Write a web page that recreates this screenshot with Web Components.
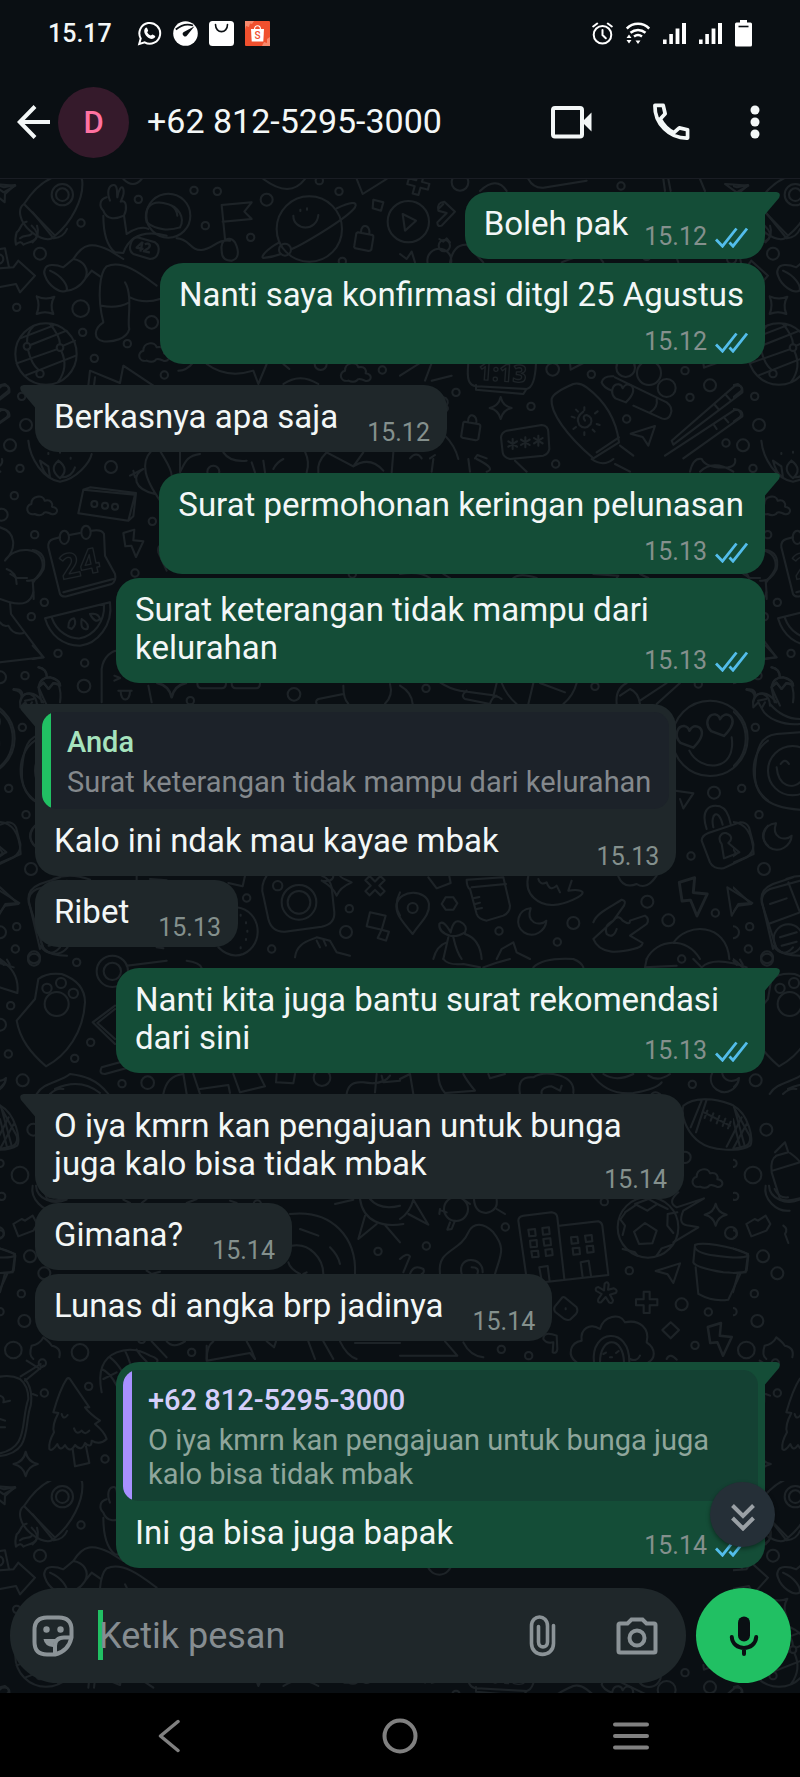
<!DOCTYPE html>
<html lang="id">
<head>
<meta charset="utf-8">
<meta name="viewport" content="width=device-width, initial-scale=1">
<title>Chat</title>
<style>
    body {
        margin: 0;
        background: #0a0f13;
        color: #f3f7f7;
        font-family: Roboto, "Noto Sans", sans-serif;
    }
</style>
</head>
<body>

<chat-app>
    <status-bar slot="top" time="15.17"></status-bar>
    <chat-header slot="top" initial="D">+62 812-5295-3000</chat-header>

    <chat-bubble side="out" tail time="15.12">Boleh pak</chat-bubble>
    <chat-bubble side="out" stacked time="15.12">Nanti saya konfirmasi ditgl 25 Agustus</chat-bubble>
    <chat-bubble side="in" tail time="15.12">Berkasnya apa saja</chat-bubble>
    <chat-bubble side="out" tail stacked time="15.13">Surat permohonan keringan pelunasan</chat-bubble>
    <chat-bubble side="out" time="15.13">Surat keterangan tidak mampu dari kelurahan</chat-bubble>
    <chat-bubble side="in" tail time="15.13">
        <quote-box slot="quote" name="Anda">Surat keterangan tidak mampu dari kelurahan</quote-box>Kalo ini ndak mau kayae mbak</chat-bubble>
    <chat-bubble side="in" time="15.13">Ribet</chat-bubble>
    <chat-bubble side="out" tail time="15.13">Nanti kita juga bantu surat rekomendasi dari sini</chat-bubble>
    <chat-bubble side="in" tail time="15.14">O iya kmrn kan pengajuan untuk bunga juga kalo bisa tidak mbak</chat-bubble>
    <chat-bubble side="in" time="15.14">Gimana?</chat-bubble>
    <chat-bubble side="in" time="15.14">Lunas di angka brp jadinya</chat-bubble>
    <chat-bubble side="out" tail time="15.14">
        <quote-box slot="quote" kind="contact" name="+62 812-5295-3000">O iya kmrn kan pengajuan untuk bunga juga kalo bisa tidak mbak</quote-box>Ini ga bisa juga bapak</chat-bubble>

    <chat-composer slot="composer" placeholder="Ketik pesan"></chat-composer>
    <system-nav slot="bottom"></system-nav>
</chat-app>

<script>
const buttonReset = `
    button {
        display: flex;
        align-items: center;
        justify-content: center;
        margin: 0;
        padding: 0;
        border: 0;
        background: none;
        color: inherit;
        font: inherit;
        cursor: pointer;
    }
    svg { display: block; flex: none; }
`;

class ChatApp extends HTMLElement {
    constructor() {
        super();
        this.attachShadow({ mode: 'open' });
        this.shadowRoot.innerHTML = `
            <style>
                :host {
                    display: flex;
                    flex-direction: column;
                    min-height: 100vh;
                }
                main {
                    flex: 1;
                    display: grid;
                    border-top: 1px solid #1a1d24;
                    overflow: hidden;
                }
                chat-wallpaper, .content { grid-area: 1 / 1; min-width: 0; }
                .content {
                    position: relative;
                    display: flex;
                    flex-direction: column;
                }
                .log {
                    flex: 1;
                    display: flex;
                    flex-direction: column;
                    gap: 4px;
                    padding: 0 35px 20px;
                    margin-top: -4px;
                }
                jump-button {
                    position: absolute;
                    right: 25px;
                    bottom: 146px;
                }
            </style>
            <slot name="top"></slot>
            <main>
                <chat-wallpaper></chat-wallpaper>
                <div class="content">
                    <div class="log"><slot></slot></div>
                    <slot name="composer"></slot>
                    <jump-button></jump-button>
                </div>
            </main>
            <slot name="bottom"></slot>
        `;
    }
}

class StatusBar extends HTMLElement {
    constructor() {
        super();
        this.attachShadow({ mode: 'open' });
    }

    connectedCallback() {
        const bars = `
            <svg width="23" height="23" viewBox="0 0 23 23" fill="#fff" aria-hidden="true">
                <path d="M0 17.5h3.6V22H0zM6.3 12h3.6v10H6.3zM12.6 6.5h3.8V22h-3.8zM19 1h4v21h-4z"/>
            </svg>`;
        this.shadowRoot.innerHTML = `
            <style>
                :host {
                    display: flex;
                    align-items: center;
                    height: 66px;
                    padding: 0 48px;
                    font-size: 25px;
                    font-weight: 500;
                }
                .group { display: flex; align-items: center; gap: 11px; }
                .right { margin-left: auto; gap: 13px; }
                .time { margin-right: 14px; }
                svg { display: block; }
            </style>
            <div class="group">
                <span class="time">${this.getAttribute('time')}</span>
                <svg width="25" height="25" viewBox="0 0 25 25" fill="none" stroke="#fff" stroke-width="2" aria-hidden="true">
                    <path d="M2.2 23l1.5-5.6A10.4 10.4 0 1 1 7.7 21.4z"/>
                    <path d="M8.2 7.2c.8-.9 1.6-.7 2 .1l.9 2.1c.2.6-.9 1.5-.9 1.9.5 1.300 2.200 2.900 3.600 3.300.5.1 1.200-1.200 1.800-1l2.200 1.100c.7.4.5 1.300 0 1.900-2.500 2.600-5.900.8-7.900-1.200s-3.900-5.400-1.700-8.200z" fill="#fff" stroke="none"/>
                </svg>
                <svg width="25" height="25" viewBox="0 0 25 25" aria-hidden="true">
                    <circle cx="12.500" cy="12.500" r="12.300" fill="#fff"/>
                    <path d="M2.800 8.500Q11 1.500 20 4.500" fill="none" stroke="#0a0f13" stroke-width="1.800"/>
                    <path d="M21.500 5.200L14.200 14.300A2.400 2.400 0 1 1 10.800 11z" fill="#0a0f13"/>
                </svg>
                <svg width="25" height="25" viewBox="0 0 25 25" aria-hidden="true">
                    <rect width="25" height="25" rx="3.500" fill="#fff"/>
                    <path d="M6.500 3.500c0 9.500 12 9.500 12 0" fill="none" stroke="#0a0f13" stroke-width="1.600" stroke-linecap="round"/>
                </svg>
                <svg width="25" height="25" viewBox="0 0 25 25" aria-hidden="true">
                    <rect width="25" height="25" rx="1" fill="#f0502e"/>
                    <path d="M0 0h9L7 3 5 2.500 4 6 1 5 0 9zM25 16v9h-8l2-4 3 1v-4z" fill="#f88a6d"/>
                    <path d="M6 8h13l-.7 12.500H6.700z" fill="#fff"/>
                    <path d="M9.500 8.500C9.500 3.500 15.500 3.500 15.500 8.500" fill="none" stroke="#fff" stroke-width="1.200"/>
                    <text x="12.500" y="18" font-size="10" text-anchor="middle" fill="#f0502e">S</text>
                </svg>
            </div>
            <div class="group right">
                <svg width="21" height="23" viewBox="0 0 21 23" fill="none" stroke="#fff" stroke-width="2" stroke-linecap="round" aria-hidden="true">
                    <circle cx="10.500" cy="12.800" r="8.800"/>
                    <path d="M10.500 8v5l3.300 3.300M1.200 4.500l4-3M19.800 4.500l-4-3"/>
                </svg>
                <svg width="24" height="23" viewBox="0 0 24 23" fill="none" stroke="#fff" stroke-width="2.500" aria-hidden="true">
                    <path d="M.8 6.500C7 .3 17 .3 23.200 6.500M4.500 10.800c4.500-3.800 10.500-3.800 15 0M8 14.500c2.500-1.900 5.500-1.900 8 0"/>
                    <path d="M9.500 18.500h5L12 22zM.5 16h5L3 12.500zM.5 18h5L3 21.500z" fill="#fff" stroke="none"/>
                </svg>
                ${bars}${bars}
                <svg width="17" height="27" viewBox="0 0 17 27" aria-hidden="true">
                    <path d="M5 0h7v2.500h3.500Q17 2.500 17 4v21q0 1.500-1.500 1.500h-14Q0 26.500 0 25V4q0-1.500 1.500-1.500H5z" fill="#fff"/>
                    <path d="M3.500 6.500h10" stroke="#0a0f13" stroke-width="1.600"/>
                </svg>
            </div>
        `;
    }
}

class ChatHeader extends HTMLElement {
    constructor() {
        super();
        this.attachShadow({ mode: 'open' });
    }

    connectedCallback() {
        this.shadowRoot.innerHTML = `
            <style>
                ${buttonReset}
                :host {
                    display: flex;
                    align-items: center;
                    height: 112px;
                    padding: 0 40px 0 17px;
                }
                .avatar {
                    display: flex;
                    align-items: center;
                    justify-content: center;
                    width: 71px;
                    height: 71px;
                    margin: 0 18px 0 8px;
                    border-radius: 50%;
                    background: #351a2b;
                    color: #ff72a1;
                    font-size: 31px;
                    font-weight: 500;
                }
                h1 {
                    flex: 1;
                    margin: 0;
                    padding-bottom: 2px;
                    font-size: 34px;
                    font-weight: 400;
                    white-space: nowrap;
                }
                .actions { display: flex; align-items: center; gap: 60px; }
            </style>
            <button type="button" aria-label="Kembali">
                <svg width="33" height="34" viewBox="0 0 33 34" fill="none" stroke="currentColor" stroke-width="4">
                    <path d="M33 17H3M18 1.500L2.800 17 18 32.500"/>
                </svg>
            </button>
            <div class="avatar">${this.getAttribute('initial')}</div>
            <h1><slot></slot></h1>
            <div class="actions">
                <button type="button" aria-label="Panggilan video">
                    <svg width="42" height="34" viewBox="0 0 42 34" fill="none" stroke="currentColor" stroke-width="4">
                        <rect x="3" y="3" width="29" height="28.500" rx="2"/>
                        <path d="M32 17l9.500-9.500v19z" fill="currentColor" stroke="none"/>
                    </svg>
                </button>
                <button type="button" aria-label="Panggilan suara">
                    <svg width="38" height="38" viewBox="0 0 39 39" fill="none" stroke="currentColor" stroke-width="3.800" stroke-linejoin="round">
                        <path d="M3 2.500H11.500L13.500 11 8.500 16.500C11.500 22.500 16.500 27.500 22.500 30.500L28 25.500 36.500 27.500V36C18 36.500 2.500 21 3 2.500z"/>
                    </svg>
                </button>
                <button type="button" aria-label="Menu lainnya">
                    <svg width="10" height="34" viewBox="0 0 10 34" fill="currentColor">
                        <circle cx="5" cy="5" r="4.500"/><circle cx="5" cy="17" r="4.500"/><circle cx="5" cy="29" r="4.500"/>
                    </svg>
                </button>
            </div>
        `;
    }
}

class ChatBubble extends HTMLElement {
    constructor() {
        super();
        this.attachShadow({ mode: 'open' });
    }

    connectedCallback() {
        const out = this.getAttribute('side') === 'out';
        const ticks = `
            <svg class="ticks" width="33" height="21" viewBox="0 0 33 21" fill="none" stroke="#53bdeb" stroke-width="2.800" role="img" aria-label="Dibaca">
                <path d="M1 12.500l6.500 6.700L21.500 1.500M14.500 15.500l3.500 3.700L32 1.500"/>
            </svg>`;
        this.shadowRoot.innerHTML = `
            <style>
                :host {
                    position: relative;
                    display: block;
                    box-sizing: border-box;
                    max-width: calc(100% - 81px);
                    border-radius: 23px;
                    font-size: 33px;
                    line-height: 38px;
                }
                :host([side="out"]) {
                    align-self: flex-end;
                    background: #144d37;
                    --tail: #144d37;
                    --quote: #144133;
                    --quote-text: #8fa69c;
                    --gap: 16px;
                    --drop: 18px;
                    --foot: 8px;
                }
                :host([side="in"]) {
                    align-self: flex-start;
                    background: #1f272a;
                    --tail: #1f272a;
                    --quote: #1c2229;
                    --quote-text: #84898d;
                    --gap: 29px;
                    --drop: 21px;
                    --foot: 5px;
                }
                /* a tail opens a new run of messages */
                :host([tail]) { margin-top: 17px; }
                :host([tail][side="out"]) { border-top-right-radius: 0; }
                :host([tail][side="in"]) { border-top-left-radius: 0; }
                .tail { position: absolute; top: 0; display: block; }
                :host([side="out"]) .tail { left: 100%; }
                :host([side="in"]) .tail { right: 100%; transform: scaleX(-1); }
                .body { display: flow-root; padding: 13px 21px var(--foot) 19px; }
                .meta {
                    float: right;
                    display: flex;
                    align-items: center;
                    gap: 8px;
                    margin: var(--drop) -4px 0 var(--gap);
                    color: #84908d;
                    font-size: 25px;
                    line-height: 28px;
                }
                :host([stacked]) .meta {
                    float: none;
                    justify-content: flex-end;
                    margin-top: 14px;
                }
                .ticks { display: block; }
            </style>
            ${this.hasAttribute('tail') ? `
                <svg class="tail" width="15" height="23" viewBox="0 0 15 23" aria-hidden="true">
                    <path d="M0 0H11.500Q16.500 1 14 6L0 22.500z" fill="var(--tail)"/>
                </svg>` : ''}
            <slot name="quote"></slot>
            <div class="body"><slot></slot><span class="meta"><time>${this.getAttribute('time')}</time>${out ? ticks : ''}</span></div>
        `;
    }
}

class QuoteBox extends HTMLElement {
    constructor() {
        super();
        this.attachShadow({ mode: 'open' });
    }

    connectedCallback() {
        this.shadowRoot.innerHTML = `
            <style>
                :host {
                    --bar: #21c063;
                    --name: #a6e3bd;
                    display: block;
                    padding: 8px 7px 0;
                    font-size: 29px;
                }
                :host([kind="contact"]) { --bar: #a791ff; --name: #d5cffb; }
                .box {
                    display: flex;
                    overflow: hidden;
                    border-radius: 15px;
                    background: var(--quote);
                }
                .bar { flex: none; width: 9px; background: var(--bar); }
                .text { padding: 12px 18px 10px 16px; }
                .name {
                    margin-bottom: 5px;
                    color: var(--name);
                    font-weight: 500;
                    line-height: 36px;
                }
                .message { color: var(--quote-text); line-height: 34px; }
            </style>
            <div class="box">
                <div class="bar"></div>
                <div class="text">
                    <div class="name">${this.getAttribute('name')}</div>
                    <div class="message"><slot></slot></div>
                </div>
            </div>
        `;
    }
}

class JumpButton extends HTMLElement {
    constructor() {
        super();
        this.attachShadow({ mode: 'open' });
        this.shadowRoot.innerHTML = `
            <style>
                ${buttonReset}
                :host { display: block; }
                button {
                    width: 65px;
                    height: 65px;
                    border-radius: 50%;
                    background: #252f37;
                    box-shadow: 0 2px 4px #0006;
                    color: #9aa0a5;
                }
                svg { margin-top: 5px; }
            </style>
            <button type="button" aria-label="Ke pesan terbaru">
                <svg width="24" height="28" viewBox="0 0 24 28" fill="none" stroke="currentColor" stroke-width="4">
                    <path d="M1.500 2.500L12 13 22.500 2.500M1.500 15L12 25.500 22.500 15"/>
                </svg>
            </button>
        `;
    }
}

class ChatComposer extends HTMLElement {
    constructor() {
        super();
        this.attachShadow({ mode: 'open' });
    }

    connectedCallback() {
        const placeholder = this.getAttribute('placeholder');
        this.shadowRoot.innerHTML = `
            <style>
                ${buttonReset}
                :host {
                    display: flex;
                    gap: 10px;
                    padding: 0 9px 10px 10px;
                }
                .field {
                    flex: 1;
                    min-width: 0;
                    display: flex;
                    align-items: center;
                    height: 95px;
                    box-sizing: border-box;
                    padding: 0 28px 0 22px;
                    border-radius: 48px;
                    background: #1f272a;
                    color: #8b9397;
                }
                .caret {
                    flex: none;
                    width: 5px;
                    height: 50px;
                    margin: 0 -4px 2px 24px;
                    background: #21c063;
                }
                input {
                    flex: 1;
                    min-width: 0;
                    padding: 0;
                    border: 0;
                    outline: 0;
                    background: none;
                    color: #f3f7f7;
                    font: 36px Roboto, "Noto Sans", sans-serif;
                }
                input::placeholder { color: #868d91; opacity: 1; }
                .attach { margin-right: 59px; }
                .mic {
                    flex: none;
                    width: 95px;
                    height: 95px;
                    border-radius: 50%;
                    background: #21c063;
                    color: #0a0f13;
                }
            </style>
            <div class="field">
                <button type="button" aria-label="Emoji dan stiker">
                    <svg width="42" height="42" viewBox="0 0 42 42" fill="none" stroke="currentColor" stroke-width="4">
                        <path d="M15 2.500H27Q39.500 2.500 39.500 15V22.500C37.500 31 31.500 37.500 23 39.500H15Q2.500 39.500 2.500 27V15Q2.500 2.500 15 2.500z"/>
                        <path d="M39 22.500H32Q23 22.500 23 31V39"/>
                        <path d="M11.500 24Q12.500 31 21 32Q21.500 26 24.500 24z" fill="currentColor" stroke="none"/>
                        <circle cx="14.500" cy="14.500" r="3.200" fill="currentColor" stroke="none"/>
                        <circle cx="28.500" cy="14.500" r="3.200" fill="currentColor" stroke="none"/>
                    </svg>
                </button>
                <span class="caret"></span>
                <input type="text" aria-label="${placeholder}" placeholder="${placeholder}">
                <button type="button" class="attach" aria-label="Lampirkan">
                    <svg width="28" height="42" viewBox="0 0 28 42" fill="none" stroke="currentColor" stroke-width="3.600" stroke-linecap="round">
                        <path d="M24.500 10.500V28.500C24.500 43 2.500 43 2.500 28.500V11C2.500-1 18.500-1 18.500 11V27C18.500 33.500 9.500 33.500 9.500 27V11.500"/>
                    </svg>
                </button>
                <button type="button" aria-label="Kamera">
                    <svg width="42" height="38" viewBox="0 0 42 38" fill="none" stroke="currentColor" stroke-width="4">
                        <path d="M4 6.500H11.500L15.500 2.500H26.500L30.500 6.500H38Q39.500 6.500 39.500 8V34Q39.500 35.500 38 35.500H4Q2.500 35.500 2.500 34V8Q2.500 6.500 4 6.500z"/>
                        <circle cx="21" cy="21" r="7.500"/>
                    </svg>
                </button>
            </div>
            <button type="button" class="mic" aria-label="Pesan suara">
                <svg width="30" height="40" viewBox="0 0 30 40" fill="none" stroke="currentColor" stroke-width="4">
                    <rect x="9" y=".5" width="12" height="25" rx="6" fill="currentColor" stroke="none"/>
                    <path d="M2.800 21C3.500 35.500 26.500 35.500 27.200 21M15 32V38" stroke-linecap="round"/>
                </svg>
            </button>
        `;
    }
}

class SystemNav extends HTMLElement {
    constructor() {
        super();
        this.attachShadow({ mode: 'open' });
        this.shadowRoot.innerHTML = `
            <style>
                ${buttonReset}
                :host {
                    display: flex;
                    height: 86px;
                    padding: 0 53px;
                    background: #000;
                    color: #808080;
                }
                button { flex: 1; }
            </style>
            <button type="button" aria-label="Kembali">
                <svg width="22" height="34" viewBox="0 0 22 34" fill="none" stroke="currentColor" stroke-width="3.500" stroke-linecap="round" stroke-linejoin="round">
                    <path d="M20 2.500L2.500 17 20 31.500"/>
                </svg>
            </button>
            <button type="button" aria-label="Beranda">
                <svg width="36" height="36" viewBox="0 0 36 36" fill="none" stroke="currentColor" stroke-width="4">
                    <circle cx="18" cy="18" r="15.500"/>
                </svg>
            </button>
            <button type="button" aria-label="Aplikasi terbaru">
                <svg width="36" height="28" viewBox="0 0 36 28" fill="none" stroke="currentColor" stroke-width="4" stroke-linecap="round">
                    <path d="M2 2.500H34M2 14H34M2 25.500H34"/>
                </svg>
            </button>
        `;
    }
}

// Doodles are drawn on a grid three times finer than the page.
// Each section is [x, y, small rings, shapes]; one ring is [cx, cy, r].
const sections = [
    [0, 0, [[243,132,11],[415,61,11],[582,34,11],[652,37,11],[800,62,18],[616,140,11],[752,175,11],[1017,37,11],[120,224,18],[50,385,11],[242,389,25],[455,430,19],[248,460,11],[382,494,11],[283,538,11],[493,588,11],[65,652,11],[78,738,18],[30,799,18],[60,868,11],[333,864,18],[43,950,11],[457,1027,11],[104,1067,11],[405,1182,11],[958,5,11],[1027,247,11],[1147,573,11],[962,555,18],[640,878,18],[5,1007,18]], `
        <path d="M72 75L165 170M72 75C50 90 60 130 90 155S150 190 165 170C215 130 250 60 247 10C246-25 200-20 160-5C120 10 95 40 72 75"/>
        <circle cx="187" cy="47" r="32"/><circle cx="187" cy="47" r="19"/>
        <path d="M80 128C60 130 65 150 50 160C45 175 45 185 48 197C60 185 65 190 70 197C80 190 100 190 108 178C118 165 105 150 95 140M60 178C75 165 85 175 95 165"/>
        <path d="M-30 10L12 25L45 18L15 45L14 70L-10 50"/>
        <path d="M330 65C320 40 325 20 340 18S350 50 352 55C355 35 365 15 370 30S365 60 362 68C380 60 382 90 372 110C350 120 320 125 310 95C295 80 300 60 320 55"/>
        <path d="M310 110C310 160 320 200 345 220L370 222C385 180 420 150 500 170M372 110L380 165C400 150 430 140 445 150"/>
        <circle cx="505" cy="110" r="66"/>
        <path d="M440 130C430 90 450 65 490 72C540 80 555 120 540 145M440 130C470 155 510 155 540 145M515 80Q530 90 532 110"/>
        <path d="M412 175L465 190Q480 200 475 220Q470 240 450 240L400 225Q385 215 392 195Q398 175 412 175"/>
        <text x="409" y="218" font-size="38" transform="rotate(12 430 205)">42</text>
        <path d="M665 78L755 70L733 98L755 120L668 128M665 78L675 180M665 215C660 180 690 170 705 190C720 220 715 240 695 245C670 245 665 230 665 215M530 178C570 180 570 215 605 213C640 210 650 180 690 185"/>
        <path d="M220 240C250 190 280 190 330 215L370 240M135 270C140 255 165 255 190 265L220 240C250 245 270 270 255 300C240 325 215 335 200 335M150 275C185 290 205 320 200 335C180 345 145 320 135 290Q130 280 135 270M255 300L275 275L300 292M310 430C290 350 300 280 320 262C370 240 430 290 470 320M375 310C400 350 380 430 388 450C380 480 340 490 310 487C280 480 280 450 310 430M305 380Q350 390 388 370M390 355C420 370 450 370 480 360"/>
        <circle cx="928" cy="150" r="98"/><circle cx="855" cy="212" r="18"/>
        <path d="M880 110C880 155 950 160 955 108M901 92v4M921 88v4M1010 88C1050 70 1075 65 1065 85C1040 120 900 200 875 210M838 190C800 210 780 235 790 237C810 235 830 230 843 225"/>
        <use href="#lock" x="1091" y="180"/>
        <path d="M1120 62L1150 70L1143 95L1118 88ZM1070 0L1088 45L1160 0M790 0Q870 60 915 0M370 0Q400 30 425 0"/>
        <path d="M-30 270L40 265L55 245L105 290L60 340L48 315L-30 330M0 210L15 208L27 265"/>
        <use href="#spark4" x="137" y="378"/>
        <circle cx="138" cy="525" r="92"/><circle cx="81" cy="502" r="10"/><circle cx="180" cy="506" r="10"/><circle cx="120" cy="584" r="11"/>
        <path d="M100 442Q80 460 81 492M84 512C92 545 100 560 116 573M150 435C170 460 180 480 180 496M184 516C200 550 195 580 175 608M60 478L160 440M91 498L200 455M50 553L170 511M190 500L225 485M75 590L228 530"/>
        <use href="#cloud" x="460" y="520"/><use href="#cloud" x="1065" y="580"/><use href="#cloud" x="124" y="980"/>
        <path d="M265 620L270 575L360 612L370 560L460 620M282 620L285 595M535 575Q560 575 580 550M620 555Q680 600 760 575L775 615L800 555M850 555L868 570M850 615Q900 580 955 615"/>
        <path d="M-5 620L15 615Q30 625 25 635L-5 660M0 690L15 692Q30 705 20 715L-5 732"/>
        <path d="M85 785C90 840 130 900 180 908C230 900 270 850 275 825M120 845L145 862L150 895Q130 885 120 845M175 845Q210 870 180 898Q145 870 175 845M225 865Q215 895 185 895M145 822v3M180 818v3M212 836v3"/>
        <path d="M455 815C420 850 430 900 495 985M480 815C500 850 515 870 515 890M540 820L540 880C555 850 560 830 600 825M390 890L430 870C395 890 400 930 465 945M400 875L405 895M670 820Q690 850 740 845M755 850L765 880M790 845L795 880M820 870Q830 850 850 840M915 818Q930 850 920 880M980 820Q950 850 955 880M980 820L1060 862L1090 820M1060 862Q1110 830 1150 875M1180 820L1175 880"/>
        <path d="M250 932L405 947L385 1025L235 1003ZM250 932L270 925L408 942L400 1012L385 1025"/>
        <circle cx="283" cy="975" r="9"/><circle cx="315" cy="980" r="9"/><circle cx="345" cy="983" r="9"/>
        <path d="M0 1045C50 1060 50 1110 15 1145C40 1100 130 1100 128 1160C128 1180 110 1190 100 1210M20 1170Q50 1180 50 1215"/>
        <path d="M180 1075L160 1080Q143 1085 145 1105L180 1245Q185 1255 200 1252L335 1215Q350 1205 345 1185L315 1130L312 1065Q305 1050 275 1055M208 1068L240 1062M190 1240L340 1200"/>
        <ellipse cx="193" cy="1075" rx="14" ry="20"/><ellipse cx="258" cy="1060" rx="14" ry="20"/>
        <text x="178" y="1190" font-size="104" font-weight="700" transform="rotate(-12 240 1150)">24</text>
        <use href="#bolt" x="398" y="1092"/>
        <path d="M500 1095Q470 1095 475 1120L500 1175"/>`],
    [400, 0, [[180,10,25],[663,21,11],[458,571,19],[574,586,11],[677,566,28],[747,582,36],[800,627,27],[930,619,18],[870,655,11],[855,575,11],[393,682,11],[168,640,11],[680,720,11],[740,232,11],[995,240,14],[978,792,11]], `
        <use href="#plus" x="55" y="15" transform="rotate(15 55 15)"/>
        <path d="M975 15L1045 20L1010 40ZM385 0Q400 28 430 26L560 5M790 0L795 36M805 0L812 36M900 0L915 36M240 36Q290 -10 320 36"/>
        <circle cx="25" cy="128" r="62"/><path d="M8 105L48 125L15 155Z"/>
        <path d="M115 95Q110 70 133 68L165 98L125 140Q112 145 112 130L140 102ZM130 75L115 90"/>
        <circle cx="133" cy="200" r="17"/><circle cx="118" cy="245" r="36"/>
        <path d="M118 180L130 188L140 178L150 190M0 225L20 240L35 218L45 250M150 250Q160 195 200 197L250 250M485 250Q510 240 520 237M600 237L610 250M830 237L835 250"/>
        <path d="M1097 100L1160 178Q1190 175 1200 150M1097 190Q1120 170 1110 140"/>
        <path d="M205 552C200 600 205 620 230 622L380 630Q405 625 408 552M228 618L228 632L370 645L378 632M510 552L512 572L550 552M910 552L912 566L950 552M0 590L60 552M75 605L95 552M95 605L155 590"/>
        <text x="235" y="606" font-size="72" font-weight="700" transform="rotate(4 300 590)">1:13</text>
        <path d="M455 660Q460 640 520 615Q540 610 560 625C620 670 650 730 657 790L580 838C500 770 450 700 455 660M657 775L590 820M660 800L700 830"/>
        <path d="M555 725Q545 710 560 708Q580 715 572 735Q555 755 538 738Q525 715 550 698M553 685v8M553 760v8M515 713l9 3M590 735l9 3M520 750l8-6M585 703l8-6M528 692l6 6M578 752l6 6"/>
        <path d="M640 592Q610 590 605 610Q610 625 635 635M645 595L800 670Q820 685 812 705Q805 725 785 718L700 680M770 660Q775 685 750 700"/>
        <use href="#heart" x="668" y="640"/>
        <path d="M815 785L1005 620Q1030 615 1027 640L820 797ZM795 830L1005 692Q1030 692 1027 712L850 838M942 675L955 690M975 645L990 662M940 735L950 750M972 715L985 730"/>
        <use href="#lock" x="212" y="748"/>
        <path d="M320 755L425 738Q445 740 445 760L448 810Q445 825 430 830L330 840Q310 835 308 820L303 775Q305 760 320 755"/>
        <use href="#star6" x="338" y="795"/><use href="#star6" x="376" y="790"/><use href="#star6" x="415" y="785"/>
        <use href="#spark4b" x="302" y="687"/><use href="#cursor" x="730" y="768"/>
        <path d="M0 1010M130 655Q150 660 140 680Q150 690 135 700M135 770Q165 800 175 840M90 838L105 828M225 838L232 828L260 838M30 838Q50 815 65 838"/>`],
    [400, 280, [[467,15,11],[78,688,11],[585,682,11],[942,1001,18],[873,1191,11],[742,1328,18],[946,1362,11],[520,1392,18],[297,1416,11],[472,1449,11],[805,1384,18],[895,675,11]], `
        <path d="M95 38L100 0M205 0L210 38M230 0Q290 30 260 38M345 5L380 38M575 0Q610 25 640 0M645 15L690 38M870 38Q880 -5 905 0M905 0Q920 30 985 25Q1010 20 1005 0M900 38Q940 0 1000 38"/>
        <path d="M0 345Q60 335 90 357M130 345L150 357M340 357Q360 340 410 357M580 345L655 350L650 357M720 345L745 357M1030 345L1050 357L1080 357"/>
        <path d="M1097 273Q1140 280 1130 330Q1110 370 1080 365M1097 365Q1100 400 1100 420M1097 560L1130 595L1097 600"/>
        <path d="M0 680Q35 700 38 735M120 670Q150 690 180 695L290 710M200 695Q180 710 195 720L270 735M290 672L280 712M270 735Q280 700 305 720M305 672Q320 710 350 735M400 672L385 735M530 672Q520 710 490 735M420 672L495 700M650 735Q645 690 680 672M660 710L690 690Q715 700 720 735M800 672L720 725M840 672L770 735"/>
        <circle cx="930" cy="838" r="113"/>
        <path d="M868 875C900 940 1010 940 995 835"/>
        <use href="#heart" transform="translate(868 830) scale(1.200)"/><use href="#heart" transform="translate(960 795) scale(1.200)"/>
        <path d="M1040 690Q1070 690 1065 710M1060 745Q1055 700 1090 705Q1110 715 1110 740M1060 745L1075 730L1085 748L1095 730M1110 735C1140 770 1170 780 1200 780M1085 748C1100 780 1150 800 1200 795M1115 625Q1140 630 1140 655M1115 685Q1120 655 1150 655Q1180 665 1180 680L1160 672L1145 690L1130 672L1115 685Q1130 720 1140 740"/>
        <path d="M1200 820L1130 825C1080 830 1070 870 1065 930C1060 1000 1090 1045 1200 1052"/>
        <circle cx="1178" cy="935" r="74"/><path d="M1130 925C1135 985 1180 990 1200 970M1142 915Q1155 895 1167 915"/>
        <path d="M826 995L880 1003L850 1048L840 1020"/>
        <path d="M905 1145Q905 1130 925 1122L1020 1090Q1040 1090 1047 1105L1060 1155Q1062 1180 1040 1195L970 1228Q940 1230 930 1210ZM920 1110C900 1050 930 1035 960 1042C985 1050 990 1085 992 1095M940 1105C930 1065 955 1045 968 1097"/>
        <path d="M965 1155C950 1135 965 1120 978 1122C1000 1130 995 1145 985 1152L1018 1180L972 1198Z"/>
        <use href="#moon" x="1133" y="1135"/><use href="#bolt" transform="translate(877 1312) scale(1.400)"/>
        <path d="M982 1285L1057 1332L1015 1335L995 1370Z"/>
        <path d="M580 1390C590 1360 640 1340 665 1322Q680 1325 672 1340L640 1385Q610 1400 620 1425Q640 1440 650 1410M640 1385Q655 1365 668 1385Q690 1400 690 1385L735 1370Q750 1380 740 1395L690 1430L728 1452Q725 1465 700 1470C660 1480 600 1490 580 1440Z"/>
        <path d="M385 1250C370 1310 420 1340 460 1338C500 1335 550 1310 548 1300Q540 1290 505 1295L515 1265M415 1260Q420 1280 440 1270Q450 1300 470 1280L480 1300M655 1252Q670 1290 710 1275Q740 1295 770 1250"/>
        <path d="M200 1262L310 1255L330 1340Q330 1360 310 1370L260 1385Q235 1380 230 1365L210 1290Q200 1285 200 1262M215 1285L318 1275M220 1318L238 1314M226 1335L240 1331M230 1350L246 1347"/>
        <path d="M38 1425C0 1380 -15 1360 -10 1335C0 1290 80 1290 87 1335C90 1370 60 1390 38 1425ZM85 1255L110 1288L152 1272L148 1252"/><circle cx="38" cy="1347" r="15"/>
        <path d="M137 1315L160 1315L172 1333L160 1352L137 1352L125 1335Z"/>
        <use href="#moon" x="397" y="1390"/>
        <path d="M150 1430Q115 1420 118 1395Q130 1380 152 1420Q160 1380 180 1388Q205 1400 195 1420Q170 1435 150 1430M145 1435L130 1500M160 1435Q170 1480 185 1500M195 1425Q240 1440 245 1500M100 1500Q110 1460 140 1450M290 1500L305 1470L340 1450L350 1480L390 1500"/>
        <path d="M1200 1265L1110 1290Q1085 1300 1085 1330L1130 1470Q1150 1490 1200 1490M1105 1395L1200 1360M1110 1335L1160 1318M1165 1270L1200 1360"/><circle cx="1165" cy="1440" r="44"/>
        <path d="M1140 1435L1190 1420M1145 1460L1190 1448M740 1500C770 1440 860 1430 900 1500M820 1452C860 1390 980 1390 988 1500"/>`],
    [0, 380, [[133,130,11],[94,173,11],[174,283,11],[254,312,11],[252,381,19],[75,350,11],[882,406,19],[571,425,11],[67,505,11],[26,688,11],[78,767,11],[93,930,18],[740,1017,11],[833,980,14],[1048,1049,11],[1038,1119,18],[50,1103,11],[46,1170,11],[102,1195,18],[815,1170,11],[0,355,18],[0,1120,18],[1057,45,11]], `
        <path d="M135 178L330 130C340 200 290 255 240 260C190 260 150 230 135 178M155 175C170 220 210 240 240 238C280 230 315 190 312 137M205 205Q205 180 222 178Q232 195 215 210ZM245 180Q270 195 262 210Q240 215 245 180M270 165Q295 160 300 180Q285 195 270 165"/>
        <path d="M30 130Q90 145 100 100M0 120L30 130L33 165L130 295L0 310M0 190Q10 205 25 200Q40 230 70 222"/>
        <path d="M305 430L305 330C310 290 340 275 350 275M445 380L455 430M343 350L360 357L343 365M355 395L395 395M362 397C362 430 390 430 390 397"/>
        <path d="M115 325Q140 330 140 355M115 385Q120 355 150 355Q175 360 180 375L160 372L145 390L130 370L115 385L125 430M175 375Q185 400 180 430M40 392Q65 395 65 415M60 430Q70 395 100 405Q120 415 130 430M75 425L100 420"/>
        <use href="#spark4b" transform="translate(515 372) scale(1.300)"/>
        <path d="M592 372Q592 388 605 388H665Q678 388 678 372M695 372Q695 388 708 388H768Q780 388 780 372M1030 405L955 420Q945 425 950 434M1030 380Q1030 420 1045 434M1170 375Q1180 410 1155 434"/>
        <path d="M-20 445C60 480 55 600 -20 635M105 545C50 580 45 680 105 725M-20 790C40 780 60 830 62 885L-20 920M0 870L10 885L-5 895M105 800Q75 830 105 860M0 985L55 1035L15 1040L0 1060M85 1020Q85 990 120 975L180 955M85 1020L120 1170M410 950V964M450 960L500 964M685 972L728 982L735 950M160 960Q210 940 270 962"/>
        <path d="M800 950Q780 980 790 1010L805 1080Q815 1120 855 1118L965 1103Q1005 1095 1003 1060L995 985Q990 960 965 950"/>
        <circle cx="897" cy="1030" r="52"/><circle cx="897" cy="1030" r="34"/>
        <path d="M965 965Q1000 970 1000 950M965 965Q1000 985 1010 1010Q1020 985 1055 970Q1020 955 1020 950"/>
        <use href="#plus" x="1125" y="980" transform="rotate(45 1125 980)"/>
        <path d="M1110 1060L1157 1070L1145 1112L1100 1102ZM1145 1112L1167 1118L1158 1145L1133 1137ZM885 1195C890 1150 930 1145 950 1135L990 1145L1010 1180L1050 1190M950 1145L960 1165M970 1142L978 1160M1200 1000Q1180 1040 1200 1070"/>
        <path d="M710 1045C785 1055 795 1155 730 1185Q690 1200 655 1165M722 1067v3M738 1090v3M742 1115v3M738 1140v3M722 1165v3M120 1160Q150 1200 180 1165M470 1165L490 1168"/>`],
    [0, 780, [[102,2,18],[230,10,11],[32,140,11],[0,197,18],[25,285,11],[272,250,11],[224,298,11],[68,364,18],[366,374,11],[443,371,19],[100,512,18],[60,648,25],[0,613,11],[5,712,11],[90,892,18],[133,943,18],[64,1004,11],[73,1086,18],[40,1173,25],[240,1180,25],[575,1180,11],[772,735,11],[966,356,25],[1134,877,11],[0,825,11],[0,1058,11]], `
        <path d="M50 185L105 120L115 60Q140 40 185 45Q255 70 255 130C250 220 200 290 138 322C90 280 60 240 50 185"/>
        <circle cx="141" cy="88" r="14"/><circle cx="183" cy="72" r="15"/><circle cx="220" cy="103" r="14"/><circle cx="170" cy="135" r="36"/>
        <circle cx="337" cy="37" r="47"/><circle cx="337" cy="37" r="26"/>
        <path d="M0 0Q60 40 52 102L0 85M380 20L500 5M560 5Q600 10 605 27M345 140L278 190L345 255M345 150L292 192L345 240M365 308L305 325Q295 345 315 345L400 322"/>
        <path d="M110 405C130 370 180 370 210 345C250 350 290 360 325 405M165 390Q240 355 300 402M150 405Q170 385 190 390M-10 395Q20 370 15 362M490 405Q500 350 550 345L560 405M580 345L600 405M600 390L685 378L690 402M700 345L720 400L795 382L775 342M830 345L828 370L880 373L885 345M1040 405Q1045 365 1090 370Q1150 380 1170 350M1130 345L1125 400M1145 350L1150 370L1200 365"/>
        <path d="M0 440L50 530Q55 550 40 560L0 570M0 480L20 560M5 450L35 560"/>
        <path d="M98 680C90 720 130 760 170 755M108 680C110 720 160 740 200 722M125 690Q140 720 165 715M370 722L390 732M440 720L425 732M560 732L590 720M690 725L710 732"/>
        <path d="M1005 735L1060 722M1095 770L1075 840L1130 795M1155 798L1200 850M1080 720C1090 790 1150 805 1210 795M1110 720Q1140 755 1200 740"/>
        <path d="M870 765C1000 750 1070 840 1065 945M875 860C930 850 970 900 970 945M900 810L955 830M990 865Q1015 890 1020 915M865 910Q870 930 900 945M910 945L920 940"/>
        <path d="M40 795L65 780L75 785L98 770L112 795L100 815L55 832ZM-10 865L45 885L38 940L-10 943M15 943L0 1000M440 935L455 945L480 938"/>
        <path d="M100 1200Q85 1190 95 1160Q120 1155 130 1135Q150 1150 155 1160Q185 1165 178 1195M455 1147L500 1195M500 1147Q520 1170 555 1147M620 1200Q620 1160 640 1147M740 1147Q755 1170 765 1200M800 1147L822 1165L828 1147M925 1147L945 1200M970 1147L1000 1200M1020 1147Q1040 1190 1070 1200M1065 1152H1200"/>`],
    [400, 780, [[877,376,11],[613,728,11],[316,804,11],[993,822,18],[688,935,11],[79,861,11],[845,1036,18],[925,1059,11],[885,1159,11],[304,1171,11],[386,1190,11],[855,595,17],[845,0,11]], `
        <path d="M130 0Q145 20 190 15L240 25M250 25Q290 10 330 0M400 25Q430 -5 520 0Q545 10 550 25M740 0L735 25L830 20M880 0L905 25Q940 -10 1040 25M1000 5L1010 18M1020 2L1028 16"/>
        <path d="M0 360L30 345L40 405M115 345Q115 380 135 402L225 395Q200 365 190 345M265 345L270 358L315 345M360 405Q350 350 400 355Q430 335 480 350Q525 365 520 402M425 405Q420 385 455 382L480 395L485 380M575 345Q620 410 700 402Q770 390 785 370M610 345Q650 370 700 345M745 350Q775 370 810 345M755 405Q765 395 780 405"/>
        <use href="#moon" x="975" y="362"/>
        <path d="M850 440C880 415 940 415 990 435C1050 460 1062 550 1050 560C1020 580 930 575 900 550C870 530 840 480 850 440M905 425L872 505M920 422L888 520M1025 475L980 563M1040 495L1000 568M912 460L990 500M922 455l-8 22M940 463l-8 22M958 471l-8 22M976 479l-8 22M992 488l-8 20"/>
        <use href="#cloud" x="920" y="658"/><use href="#spark4b" x="947" y="767"/>
        <circle cx="744" cy="805" r="91"/>
        <path d="M735 792L770 815L757 853L717 855L702 818ZM705 735L745 720L772 735L742 755ZM803 765L832 760M803 765L802 800L820 822M662 780L675 762M660 780L675 800L668 828M668 870L705 880L712 890M770 890L785 868L815 858M675 760L705 740M772 735L803 750"/>
        <path d="M835 700Q800 730 830 745L912 718L850 755Q830 800 870 800L895 805L820 850"/>
        <path d="M0 780Q30 760 40 722L85 797L25 765M125 755L140 760M150 790L142 812L155 810L165 785M210 735L195 725M290 750L315 765M118 765L120 750"/>
        <circle cx="168" cy="750" r="36"/><path d="M222 722Q225 760 258 762Q295 755 290 722"/>
        <path d="M120 945C110 870 180 880 205 820C220 790 250 790 280 820C320 870 300 890 285 945M185 945C170 890 250 890 248 940M215 925Q240 925 232 945"/>
        <path d="M378 945L355 785Q355 772 370 770L455 760Q470 762 472 775L493 960M478 800L595 787Q605 790 607 800L625 948L430 970M385 812L405 810L407 830L388 832ZM427 807L447 805L449 825L429 827ZM390 845L410 843L411 863L392 865ZM430 840L451 838L453 858L433 860ZM394 877L414 875L416 893L397 895ZM436 872L456 870L458 888L438 891ZM513 835L532 833L535 852L515 854ZM555 830L575 828L577 847L558 849ZM518 868L538 866L540 885L520 887ZM560 862L579 860L581 879L562 881ZM418 925L443 921L449 968M418 925L425 965M542 910L566 905L573 950M542 910L548 955"/>
        <path d="M885 858Q900 850 950 858Q1040 875 1045 890L1040 935Q1030 945 970 940Q885 925 880 910ZM885 865Q890 885 960 892Q1030 900 1043 890M887 925L895 1005Q940 1030 985 1022L1022 942"/>
        <path d="M1150 800Q1165 810 1155 825L1165 852M1125 580L1155 550L1165 580L1128 590M1115 640Q1110 600 1130 590M1170 582Q1195 600 1200 610M1118 635L1200 610M1115 640L1140 720Q1160 730 1200 718"/>
        <path d="M0 900Q20 880 30 892L10 940M30 945Q40 915 70 930Q75 940 65 945"/>
        <use href="#cursor" x="805" y="940"/>
        <use href="#aster" x="617" y="1002"/><use href="#plus" x="740" y="1030"/>
        <path d="M487 1015Q492 1012 500 1020L530 1045Q535 1055 528 1065L510 1082Q500 1085 490 1078L465 1058Q460 1050 465 1042ZM497 1048v3M812 1090L837 1113L812 1138L787 1113Z"/>
        <use href="#bolt" transform="translate(957 1140) scale(1.200)"/>
        <path d="M530 1210C500 1190 510 1150 545 1145C540 1110 570 1090 600 1110C610 1070 660 1060 675 1090C720 1080 750 1110 740 1150C770 1170 765 1200 745 1210M582 1210C570 1110 690 1100 688 1210M600 1210C600 1130 670 1130 672 1210M610 1185l8-4M648 1182l8-6M630 1195h6M470 1130Q430 1115 430 1140Q440 1155 460 1150L458 1180Q470 1185 472 1170ZM135 1147L172 1190H0M190 1150Q210 1190 250 1195"/>`],
    [0, 1160, [[133,162,11],[266,142,11],[315,360,11],[425,1,11],[127,72,11]], `
        <path d="M200 120Q180 150 160 220L175 222Q155 260 162 280Q145 310 148 330Q155 340 172 315Q180 340 195 318Q210 345 225 318Q245 340 255 312Q275 330 275 305Q300 320 320 300Q315 280 285 255L300 245Q270 225 255 205L268 205Q230 150 210 120Q205 115 200 120M185 225Q190 245 203 228M222 268Q230 290 245 275Q255 290 268 275M218 330L225 382L268 372L258 322"/>
        <path d="M-10 115Q30 105 60 120Q85 140 85 180C60 250 90 330 -10 345M75 120Q100 150 92 200C70 260 100 345 -10 352M0 170Q15 175 10 190L30 185M0 240L15 245M0 265L15 265M62 112L122 75M75 125L130 80M120 90L80 65"/>
        <path d="M305 160C295 110 300 60 350 40Q400 20 450 50Q480 60 470 70M310 120L350 100M305 90Q330 100 350 140M330 55Q350 70 365 95M375 35Q385 55 390 72M410 32Q420 50 440 68M620 65L750 42M620 65V20M750 42L765 60"/>
        <use href="#spark4b" transform="translate(77 375) scale(1.100)"/>`],
    [400, 1160, [], `
        <path d="M1097 165L1110 170M800 60Q810 40 830 62M690 60Q710 70 720 50"/>`]
];

class ChatWallpaper extends HTMLElement {
    constructor() {
        super();
        this.attachShadow({ mode: 'open' });
        const doodles = sections.map(([x, y, rings, shapes]) => `
            <g transform="translate(${x} ${y}) scale(.33333)">
                ${rings.map(([cx, cy, r]) => `<circle cx="${cx}" cy="${cy}" r="${r}"/>`).join('')}
                ${shapes}
            </g>`).join('');
        this.shadowRoot.innerHTML = `
            <style>
                :host { display: block; background: #0a0f13; height: 0; min-height: 100%; }
                svg { display: block; width: 100%; height: 100%; }
                text { font-family: "Open Sans", sans-serif; stroke-width: 4px; }
            </style>
            <svg aria-hidden="true">
                <defs>
                    <path id="spark4" d="M-27-26Q0-14 26-25Q11 0 23 27Q-2 17-27 27Q-16 0-27-26"/>
                    <path id="spark4b" d="M0-33Q6-6 33 0Q6 6 0 33Q-6 6-33 0Q-6-6 0-33"/>
                    <path id="plus" d="M-9-32H9V-9H32V9H9V32H-9V9H-32V-9H-9Z"/>
                    <path id="bolt" d="M-28-30L5-40L2-8L32-5L10 42L-4 8L-22 10Z"/>
                    <path id="cloud" d="M-20 25C-45 30-50 0-30-5C-30-30 5-35 10-15C30-20 35-5 32 3C55 5 50 30 30 25Q10 15 5 25Q-5 32-20 25"/>
                    <path id="lock" d="M-18-20L26-12Q30-10 29-5L23 32Q20 36 15 36L-25 28Q-30 25-28 20L-22-17ZM-8-20C-8-50 22-42 17-14"/>
                    <path id="moon" d="M-5-42C-45-40-55 10-25 30C5 50 40 25 42-5C20 15-20 0-5-42"/>
                    <path id="heart" d="M10 30L-22 18C-40 0-30-25-12-24Q-2-22 0-12Q10-30 26-20C40-5 25 15 10 30"/>
                    <path id="cursor" d="M-38-4L35-27L15 32L-2 6Z"/>
                    <path id="star6" d="M0-15V15M-13-8L13 8M-13 8L13-8"/>
                    <path id="aster" d="M-5-8L-3-28Q5-38 9-26L7-10L25-14Q38-8 30 0L13 5L22 22Q20 34 10 28L0 12L-14 28Q-26 30-22 18L-12 3L-28-6Q-34-16-22-18Z"/>
                    <g id="tile">${doodles}</g>
                    <pattern id="paper" width="733" height="1302" patternUnits="userSpaceOnUse">
                        <g fill="none" stroke="#1d2327" stroke-width="6" stroke-linecap="round" stroke-linejoin="round">
                            <use href="#tile"/>
                            <use href="#tile" x="-733"/>
                            <use href="#tile" y="-1302"/>
                        </g>
                    </pattern>
                </defs>
                <rect width="100%" height="100%" fill="url(#paper)"/>
            </svg>
        `;
    }
}

customElements.define('chat-wallpaper', ChatWallpaper);
customElements.define('status-bar', StatusBar);
customElements.define('chat-header', ChatHeader);
customElements.define('quote-box', QuoteBox);
customElements.define('chat-bubble', ChatBubble);
customElements.define('jump-button', JumpButton);
customElements.define('chat-composer', ChatComposer);
customElements.define('system-nav', SystemNav);
customElements.define('chat-app', ChatApp);
</script>
</body>
</html>
